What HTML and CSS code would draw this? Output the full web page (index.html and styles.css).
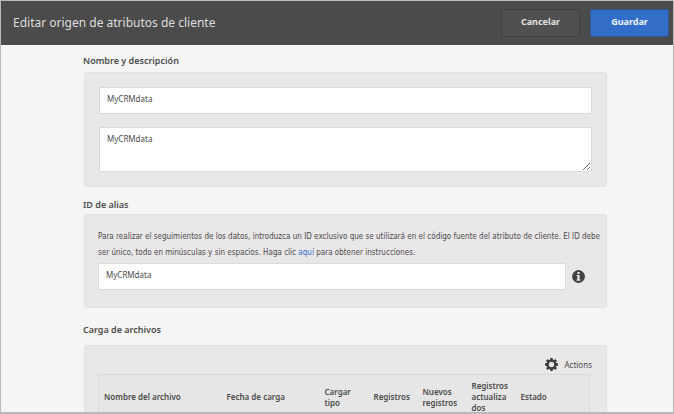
FILE: index.html
```html
<!DOCTYPE html>
<html lang="es">
<head>
<meta charset="utf-8">
<title>Editar origen de atributos de cliente</title>
<link rel="stylesheet" href="styles.css">
</head>
<body>
<div class="frame">
  <header class="topbar">
    <h1 class="title">Editar origen de atributos de cliente</h1>
    <div class="actions">
      <button class="btn" type="button">Cancelar</button>
      <button class="btn btn-primary" type="submit" form="source-form">Guardar</button>
    </div>
  </header>
  <form class="content" id="source-form">
    <section class="section">
      <h2 class="heading">Nombre y descripción</h2>
      <div class="panel stack">
        <input class="field" type="text" aria-label="Nombre" value="MyCRMdata">
        <textarea class="field area" aria-label="Descripción">MyCRMdata</textarea>
      </div>
    </section>
    <section class="section section-alias">
      <h2 class="heading"><label for="alias">ID de alias</label></h2>
      <div class="panel alias">
        <p class="help">Para realizar el seguimientos de los datos, introduzca un ID exclusivo que se utilizará en el código fuente del atributo de cliente. El ID debe ser único, todo en minúsculas y sin espacios. Haga clic <a href="#alias">aquí</a> para obtener instrucciones.</p>
        <div class="alias-row">
          <input class="field" id="alias" type="text" value="MyCRMdata">
          <svg class="info" viewBox="0 0 13 13" aria-hidden="true"><circle cx="6.5" cy="6.5" r="6.4" fill="#424242"/><path d="M5.4 1.9h2.2v2H5.4zM4.6 4.9h3v4.7h.8v1.2H4.6V9.6h.8V6.1h-.8z" fill="#e9e7e8"/></svg>
        </div>
      </div>
    </section>
    <section class="section section-files">
      <h2 class="heading">Carga de archivos</h2>
      <div class="panel files">
        <button class="menu" type="button">
          <svg class="gear" viewBox="0 0 24 24" aria-hidden="true"><g fill="#3f3f3f"><path id="tooth" d="M9.8 0h4.4l1 6H8.8z"/><use href="#tooth" transform="rotate(45 12 12)"/><use href="#tooth" transform="rotate(90 12 12)"/><use href="#tooth" transform="rotate(135 12 12)"/><use href="#tooth" transform="rotate(180 12 12)"/><use href="#tooth" transform="rotate(225 12 12)"/><use href="#tooth" transform="rotate(270 12 12)"/><use href="#tooth" transform="rotate(315 12 12)"/></g><circle cx="12" cy="12" r="7" fill="none" stroke="#3f3f3f" stroke-width="4"/></svg>
          Actions
        </button>
        <table class="table">
          <colgroup><col class="c-name"><col class="c-date"><col class="c-s"><col class="c-s"><col class="c-s"><col class="c-s"><col></colgroup>
          <thead>
            <tr><th>Nombre del archivo</th><th>Fecha de carga</th><th>Cargar tipo</th><th>Registros</th><th>Nuevos registros</th><th>Registros actualizados</th><th>Estado</th></tr>
          </thead>
        </table>
      </div>
    </section>
  </form>
</div>
</body>
</html>
```
FILE: styles.css
```css
* { box-sizing: border-box; }
body {
  margin: 0;
  font-family: "Noto Sans", "Open Sans", sans-serif;
  font-size: 8px;
  color: #4b4b4b;
}
.frame {
  height: 100vh;
  overflow: hidden;
  border: 1px solid #b9b9b9;
  border-bottom-width: 2px;
  background: #f5f5f5;
}
.topbar {
  display: flex;
  align-items: center;
  justify-content: space-between;
  height: 44px;
  padding: 0 4px 0 12px;
  background: #4b4b4b;
}
.title {
  margin: 0;
  padding-bottom: 2px;
  font-size: 12px;
  font-weight: 400;
  color: #dedede;
}
.actions { display: flex; gap: 10px; }
.btn {
  width: 79px;
  height: 28px;
  padding: 0 0 4px;
  border: 1px solid #3f3f3f;
  border-radius: 2px;
  background: #505050;
  font: 700 9px "Noto Sans", "Open Sans", sans-serif;
  color: #e0e0e0;
}
.btn-primary { background: #326ec8; border-color: #31588f; color: #f0f4fa; }
.content { padding: 8px 66px 0 83px; }
.section { margin-bottom: 10px; }
.heading {
  margin: 0 0 3px -1px;
  font-size: 9px;
  font-weight: 600;
  line-height: 16px;
}
.section-alias { margin-bottom: 14px; }
.section-alias .heading { margin-bottom: 1px; }
.section-files .heading { margin-bottom: 7px; }
.panel {
  padding: 14px;
  border: 1px solid #e1e1e1;
  border-radius: 3px;
  background: #e9e7e8;
}
.stack { display: flex; flex-direction: column; gap: 13px; }
.field {
  display: block;
  width: 100%;
  height: 27px;
  padding: 0 7px 5px;
  border: 1px solid #d9d9d9;
  border-radius: 1px;
  background: #fff;
  font: 400 8px/12px "Noto Sans", "Open Sans", sans-serif;
  color: #4b4b4b;
}
.area { height: 45px; padding-top: 5px; resize: vertical; }
.alias { padding: 14px 3px 17px 13px; }
.help {
  margin: 0 0 2px;
  font-family: "DejaVu Sans Condensed", "Noto Sans", sans-serif;
  line-height: 16px;
}
.help a { color: #326ec8; text-decoration: none; }
.alias-row {
  display: flex;
  align-items: center;
  gap: 6px;
  padding-right: 18px;
}
.info { flex: none; width: 13px; height: 13px; }
.files { padding: 12px 16px 14px 13px; }
.menu {
  display: flex;
  align-items: center;
  gap: 6px;
  margin: 0 -2px 3px auto;
  padding: 0;
  border: 0;
  background: none;
  font: 400 8px/13px "Noto Sans", "Open Sans", sans-serif;
  color: #4b4b4b;
}
.gear { width: 13px; height: 13px; }
.table {
  width: 100%;
  table-layout: fixed;
  border-collapse: separate;
  border-spacing: 0;
  border: 1px solid #d9d9d9;
  background: #e6e6e6;
}
.table th {
  padding: 5px;
  font-weight: 600;
  line-height: 11px;
  text-align: left;
  overflow-wrap: anywhere;
}
.c-name { width: 25%; }
.c-date { width: 20%; }
.c-s { width: 10%; }
```
